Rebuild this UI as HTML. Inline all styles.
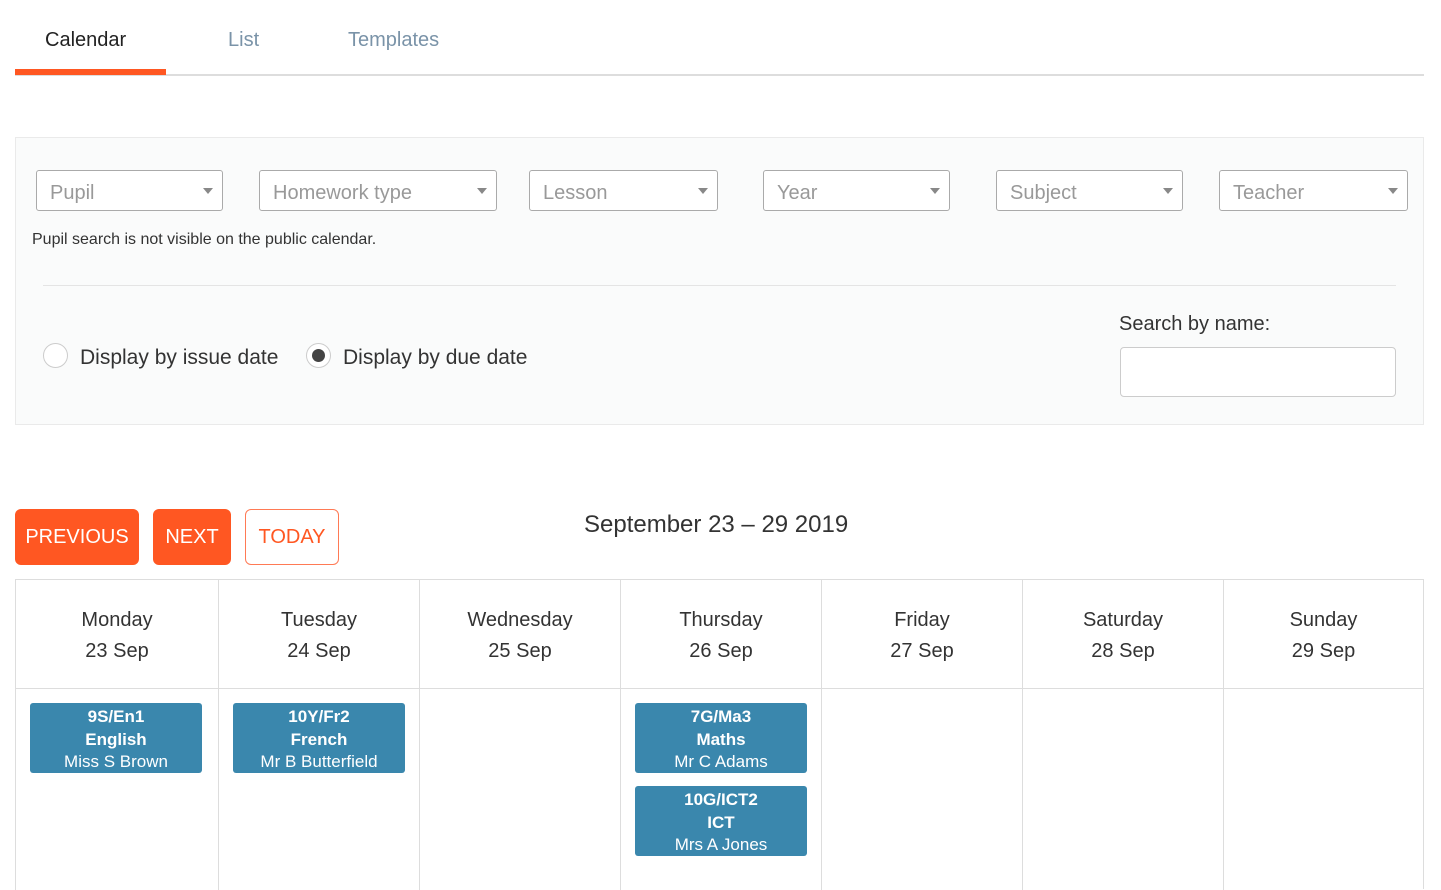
<!DOCTYPE html>
<html><head><meta charset="utf-8"><style>
*{box-sizing:border-box;margin:0;padding:0}
body{width:1441px;height:885px;overflow:hidden;background:#fff;font-family:"Liberation Sans",sans-serif;color:#333;position:relative}
.a{position:absolute}
.tab{position:absolute;top:29px;font-size:20px;color:#7a93a8}
.sel{position:absolute;top:170px;height:41px;border:1px solid #aaa;border-radius:3px;background:#fff;font-size:20px;color:#999;padding:11px 0 0 13px}
.sel:after{content:"";position:absolute;right:9px;top:17px;border-left:5px solid transparent;border-right:5px solid transparent;border-top:6px solid #888}
.col{position:absolute;top:580px;height:310px;border-left:1px solid #ddd;width:201px}
.hd{height:109px;border-bottom:1px solid #ddd;text-align:center;font-size:20px;line-height:31px;padding-top:25px;color:#333}
.ev{position:absolute;left:14px;width:172px;height:70px;background:#3a87ad;border-radius:3px;color:#fff;text-align:center;font-size:17px;line-height:22.5px;padding-top:3px}
.ev b{font-weight:bold}
.btn{position:absolute;top:509px;height:56px;border-radius:6px;font-size:20px;line-height:57px;text-align:center}
</style></head><body>
<div class="tab" style="left:45px;color:#222">Calendar</div>
<div class="tab" style="left:228px">List</div>
<div class="tab" style="left:348px">Templates</div>
<div class="a" style="left:15px;top:74px;width:1409px;height:2px;background:#ddd"></div>
<div class="a" style="left:15px;top:69px;width:151px;height:6px;background:#ff5722"></div>

<div class="a" style="left:15px;top:137px;width:1409px;height:288px;background:#fafbfb;border:1px solid #eaeaea"></div>
<div class="sel" style="left:36px;width:187px">Pupil</div>
<div class="sel" style="left:259px;width:238px">Homework type</div>
<div class="sel" style="left:529px;width:189px">Lesson</div>
<div class="sel" style="left:763px;width:187px">Year</div>
<div class="sel" style="left:996px;width:187px">Subject</div>
<div class="sel" style="left:1219px;width:189px">Teacher</div>
<div class="a" style="left:32px;top:231px;font-size:16px;color:#333">Pupil search is not visible on the public calendar.</div>
<div class="a" style="left:43px;top:285px;width:1353px;height:1px;background:#e4e4e4"></div>
<div class="a" style="left:43px;top:343px;width:25px;height:25px;border:1px solid #ccc;border-radius:50%;background:#fff"></div>
<div class="a" style="left:80px;top:346px;font-size:21px;color:#333">Display by issue date</div>
<div class="a" style="left:306px;top:343px;width:25px;height:25px;border:1px solid #ccc;border-radius:50%;background:#fff"></div>
<div class="a" style="left:312px;top:349px;width:13px;height:13px;border-radius:50%;background:#444"></div>
<div class="a" style="left:343px;top:346px;font-size:21px;color:#333">Display by due date</div>
<div class="a" style="left:1119px;top:313px;font-size:20px;color:#333">Search by name:</div>
<div class="a" style="left:1120px;top:347px;width:276px;height:50px;border:1px solid #ccc;border-radius:4px;background:#fff"></div>

<div class="btn" style="left:15px;width:124px;background:#ff5722;color:#fff">PREVIOUS</div>
<div class="btn" style="left:153px;width:78px;background:#ff5722;color:#fff">NEXT</div>
<div class="btn" style="left:245px;width:94px;border:1px solid #ff7a55;color:#ff5722;line-height:55px">TODAY</div>
<div class="a" style="left:584px;top:511px;font-size:24px;color:#333">September 23 – 29 2019</div>

<div class="a" style="left:15px;top:579px;width:1409px;height:1px;background:#ddd"></div>
<div class="a" style="left:1423px;top:579px;width:1px;height:310px;background:#ddd"></div>
<div class="col" style="left:15px;width:203px"><div class="hd">Monday<br>23 Sep</div><div class="ev" style="top:123px"><b>9S/En1<br>English</b><br>Miss S Brown</div></div>
<div class="col" style="left:218px"><div class="hd">Tuesday<br>24 Sep</div><div class="ev" style="top:123px"><b>10Y/Fr2<br>French</b><br>Mr B Butterfield</div></div>
<div class="col" style="left:419px"><div class="hd">Wednesday<br>25 Sep</div></div>
<div class="col" style="left:620px"><div class="hd">Thursday<br>26 Sep</div><div class="ev" style="top:123px"><b>7G/Ma3<br>Maths</b><br>Mr C Adams</div><div class="ev" style="top:206px"><b>10G/ICT2<br>ICT</b><br>Mrs A Jones</div></div>
<div class="col" style="left:821px"><div class="hd">Friday<br>27 Sep</div></div>
<div class="col" style="left:1022px"><div class="hd">Saturday<br>28 Sep</div></div>
<div class="col" style="left:1223px;width:200px"><div class="hd">Sunday<br>29 Sep</div></div>
</body></html>
